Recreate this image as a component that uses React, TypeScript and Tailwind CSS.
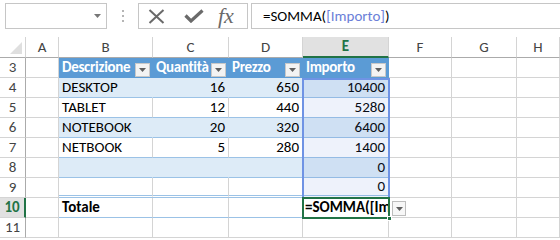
import React from "react";

const FONT = { fontFamily: "Calibri, Carlito, Roboto, 'Liberation Sans', sans-serif" };

function FilterBtn() {
  return (
    <div className="absolute right-[2px] top-[5px] w-[15px] h-[14px] bg-[#f3f3f3] border border-[#c8c8c8] flex items-center justify-center">
      <svg width="7" height="4" viewBox="0 0 7 4"><path d="M0 0H7L3.5 4Z" fill="#5f5f5f" /></svg>
    </div>
  );
}

function RowHdr({ n, active }: { n: number; active?: boolean }) {
  return (
    <div
      className={
        "h-[20px] flex items-center justify-center border-b border-[#d4d4d4] " +
        (active
          ? "bg-[#e1e1e1] text-[#217346] font-bold border-r-2 border-r-[#217346]"
          : "text-[#444] border-r border-r-[#ababab]")
      }
    >
      {n}
    </div>
  );
}

export default function App() {
  const g = "h-[20px] border-r border-b border-[#d4d4d4]";
  const band = "bg-[#ddebf7] border-r-[#ddebf7] border-b-[#9bc2e6]";
  const white = "border-b-[#9bc2e6]";
  const num = "flex items-center justify-end pr-[3px]";
  const txt = "flex items-center pl-[3px] text-black";

  const rows: { n: number; banded: boolean; d?: string; q?: string; p?: string; i?: string }[] = [
    { n: 4, banded: true, d: "DESKTOP", q: "16", p: "650", i: "10400" },
    { n: 5, banded: false, d: "TABLET", q: "12", p: "440", i: "5280" },
    { n: 6, banded: true, d: "NOTEBOOK", q: "20", p: "320", i: "6400" },
    { n: 7, banded: false, d: "NETBOOK", q: "5", p: "280", i: "1400" },
    { n: 8, banded: true, i: "0" },
    { n: 9, banded: false, i: "0" },
  ];

  return (
    <div className="w-[560px] h-[240px] overflow-hidden bg-white relative text-[15px] leading-none" style={FONT}>
      {/* toolbar */}
      <div className="h-[37px] flex items-start pt-[3px] pl-[5px]">
        <div className="w-[102px] h-[26px] border border-[#c6c6c6] flex items-center justify-end pr-[5px]">
          <svg width="7" height="4" viewBox="0 0 7 4"><path d="M0 0H7L3.5 4Z" fill="#777" /></svg>
        </div>
        <div className="w-[31px] h-[26px] flex flex-col items-center justify-center gap-[3px]">
          <div className="w-[2px] h-[2px] bg-[#b5b5b5]" />
          <div className="w-[2px] h-[2px] bg-[#b5b5b5]" />
          <div className="w-[2px] h-[2px] bg-[#b5b5b5]" />
        </div>
        <div className="w-[110px] h-[26px] border border-[#c6c6c6] flex items-center">
          <svg className="ml-[9px]" width="17" height="15" viewBox="0 0 17 15">
            <path d="M1.5 1L15.5 14M15.5 1L1.5 14" stroke="#6a6a6a" strokeWidth="2" fill="none" />
          </svg>
          <svg className="ml-[19px]" width="20" height="14" viewBox="0 0 20 14">
            <path d="M1.5 6.5L7 12L18.5 1.5" stroke="#6a6a6a" strokeWidth="3.2" fill="none" />
          </svg>
          <span
            className="ml-[14px] text-[22px] italic text-[#6a6a6a]"
            style={{ fontFamily: "'Liberation Serif', 'DejaVu Serif', serif" }}
          >
            fx
          </span>
        </div>
        <div className="ml-[3px] flex-1 h-[26px] border border-[#c6c6c6] border-r-0 flex items-center pl-[11px] text-black">
          =SOMMA(<span className="text-[#6b7fd8]">[Importo]</span>)
        </div>
      </div>

      {/* grid */}
      <div className="relative grid grid-cols-[26px_33px_94px_76px_74px_86px_63px_65px_1fr]">
        {/* column header */}
        <div className="h-[21px] border-r border-b border-r-[#d4d4d4] border-b-[#ababab] relative">
          <svg className="absolute right-[3px] bottom-[3px]" width="12" height="12" viewBox="0 0 12 12">
            <path d="M12 0V12H0Z" fill="#dfdfdf" />
          </svg>
        </div>
        {["A", "B", "C", "D", "E", "F", "G", "H"].map((c) =>
          c === "E" ? (
            <div
              key={c}
              className="h-[21px] bg-[#e1e1e1] border-r border-r-[#d4d4d4] border-b-2 border-b-[#217346] flex items-center justify-center text-[#217346] font-bold"
            >
              {c}
            </div>
          ) : (
            <div
              key={c}
              className="h-[21px] border-r border-b border-r-[#d4d4d4] border-b-[#ababab] flex items-center justify-center text-[#444]"
            >
              {c}
            </div>
          )
        )}

        {/* row 3 */}
        <RowHdr n={3} />
        <div className={g} />
        {["Descrizione", "Quantità", "Prezzo", "Importo"].map((h) => (
          <div key={h} className={`${g} relative bg-[#5b9bd5] border-r-[#5b9bd5] border-b-[#5b9bd5] flex items-center pl-[3px] text-white font-bold tracking-[-0.3px]`}>
            {h}
            <FilterBtn />
          </div>
        ))}
        <div className={g} />
        <div className={g} />
        <div className={g} />

        {rows.map((r) => {
          const tc = r.banded ? band : white;
          const last = r.n === 9 ? " border-b-[3px] border-double border-b-[#9bc2e6]" : "";
          return (
            <React.Fragment key={r.n}>
              <RowHdr n={r.n} />
              <div className={g} />
              <div className={`${g} ${tc} ${txt}${last}`}>{r.d}</div>
              <div className={`${g} ${tc} ${num}${last}`}>{r.q}</div>
              <div className={`${g} ${tc} ${num}${last}`}>{r.p}</div>
              <div className={`${g} ${tc} ${num}${last}`}>{r.i}</div>
              <div className={g} />
              <div className={g} />
              <div className={g} />
            </React.Fragment>
          );
        })}

        {/* row 10 */}
        <RowHdr n={10} active />
        <div className={g} />
        <div className={`${g} border-b-[#9bc2e6] ${txt} font-bold`}>Totale</div>
        <div className={`${g} border-b-[#9bc2e6]`} />
        <div className={`${g} border-b-[#9bc2e6]`} />
        <div className={`${g} border-b-[#9bc2e6] flex items-center pl-[2px] font-bold text-black overflow-hidden whitespace-nowrap`}>
          =SOMMA([Im
        </div>
        <div className={g} />
        <div className={g} />
        <div className={g} />

        {/* row 11 */}
        <RowHdr n={11} />
        {Array.from({ length: 8 }).map((_, i) => (
          <div key={i} className={g} />
        ))}

        {/* reference highlight E4:E9 */}
        <div className="absolute left-[302px] top-[41px] w-[88px] h-[121px] border-2 border-[#6f93e4] bg-[rgba(90,130,220,0.1)] pointer-events-none" />
        {/* active cell E10 */}
        <div className="absolute left-[302px] top-[160px] w-[88px] h-[22px] border-2 border-[#217346] pointer-events-none" />
        <div className="absolute left-[387px] top-[179px] w-[5px] h-[5px] bg-[#217346] border border-white" />
        {/* total dropdown */}
        <div className="absolute left-[392px] top-[164px] w-[14px] h-[15px] bg-[#f7f7f7] border border-[#bdbdbd] flex items-center justify-center">
          <svg width="7" height="4" viewBox="0 0 7 4"><path d="M0 0H7L3.5 4Z" fill="#5f5f5f" /></svg>
        </div>
      </div>
    </div>
  );
}
